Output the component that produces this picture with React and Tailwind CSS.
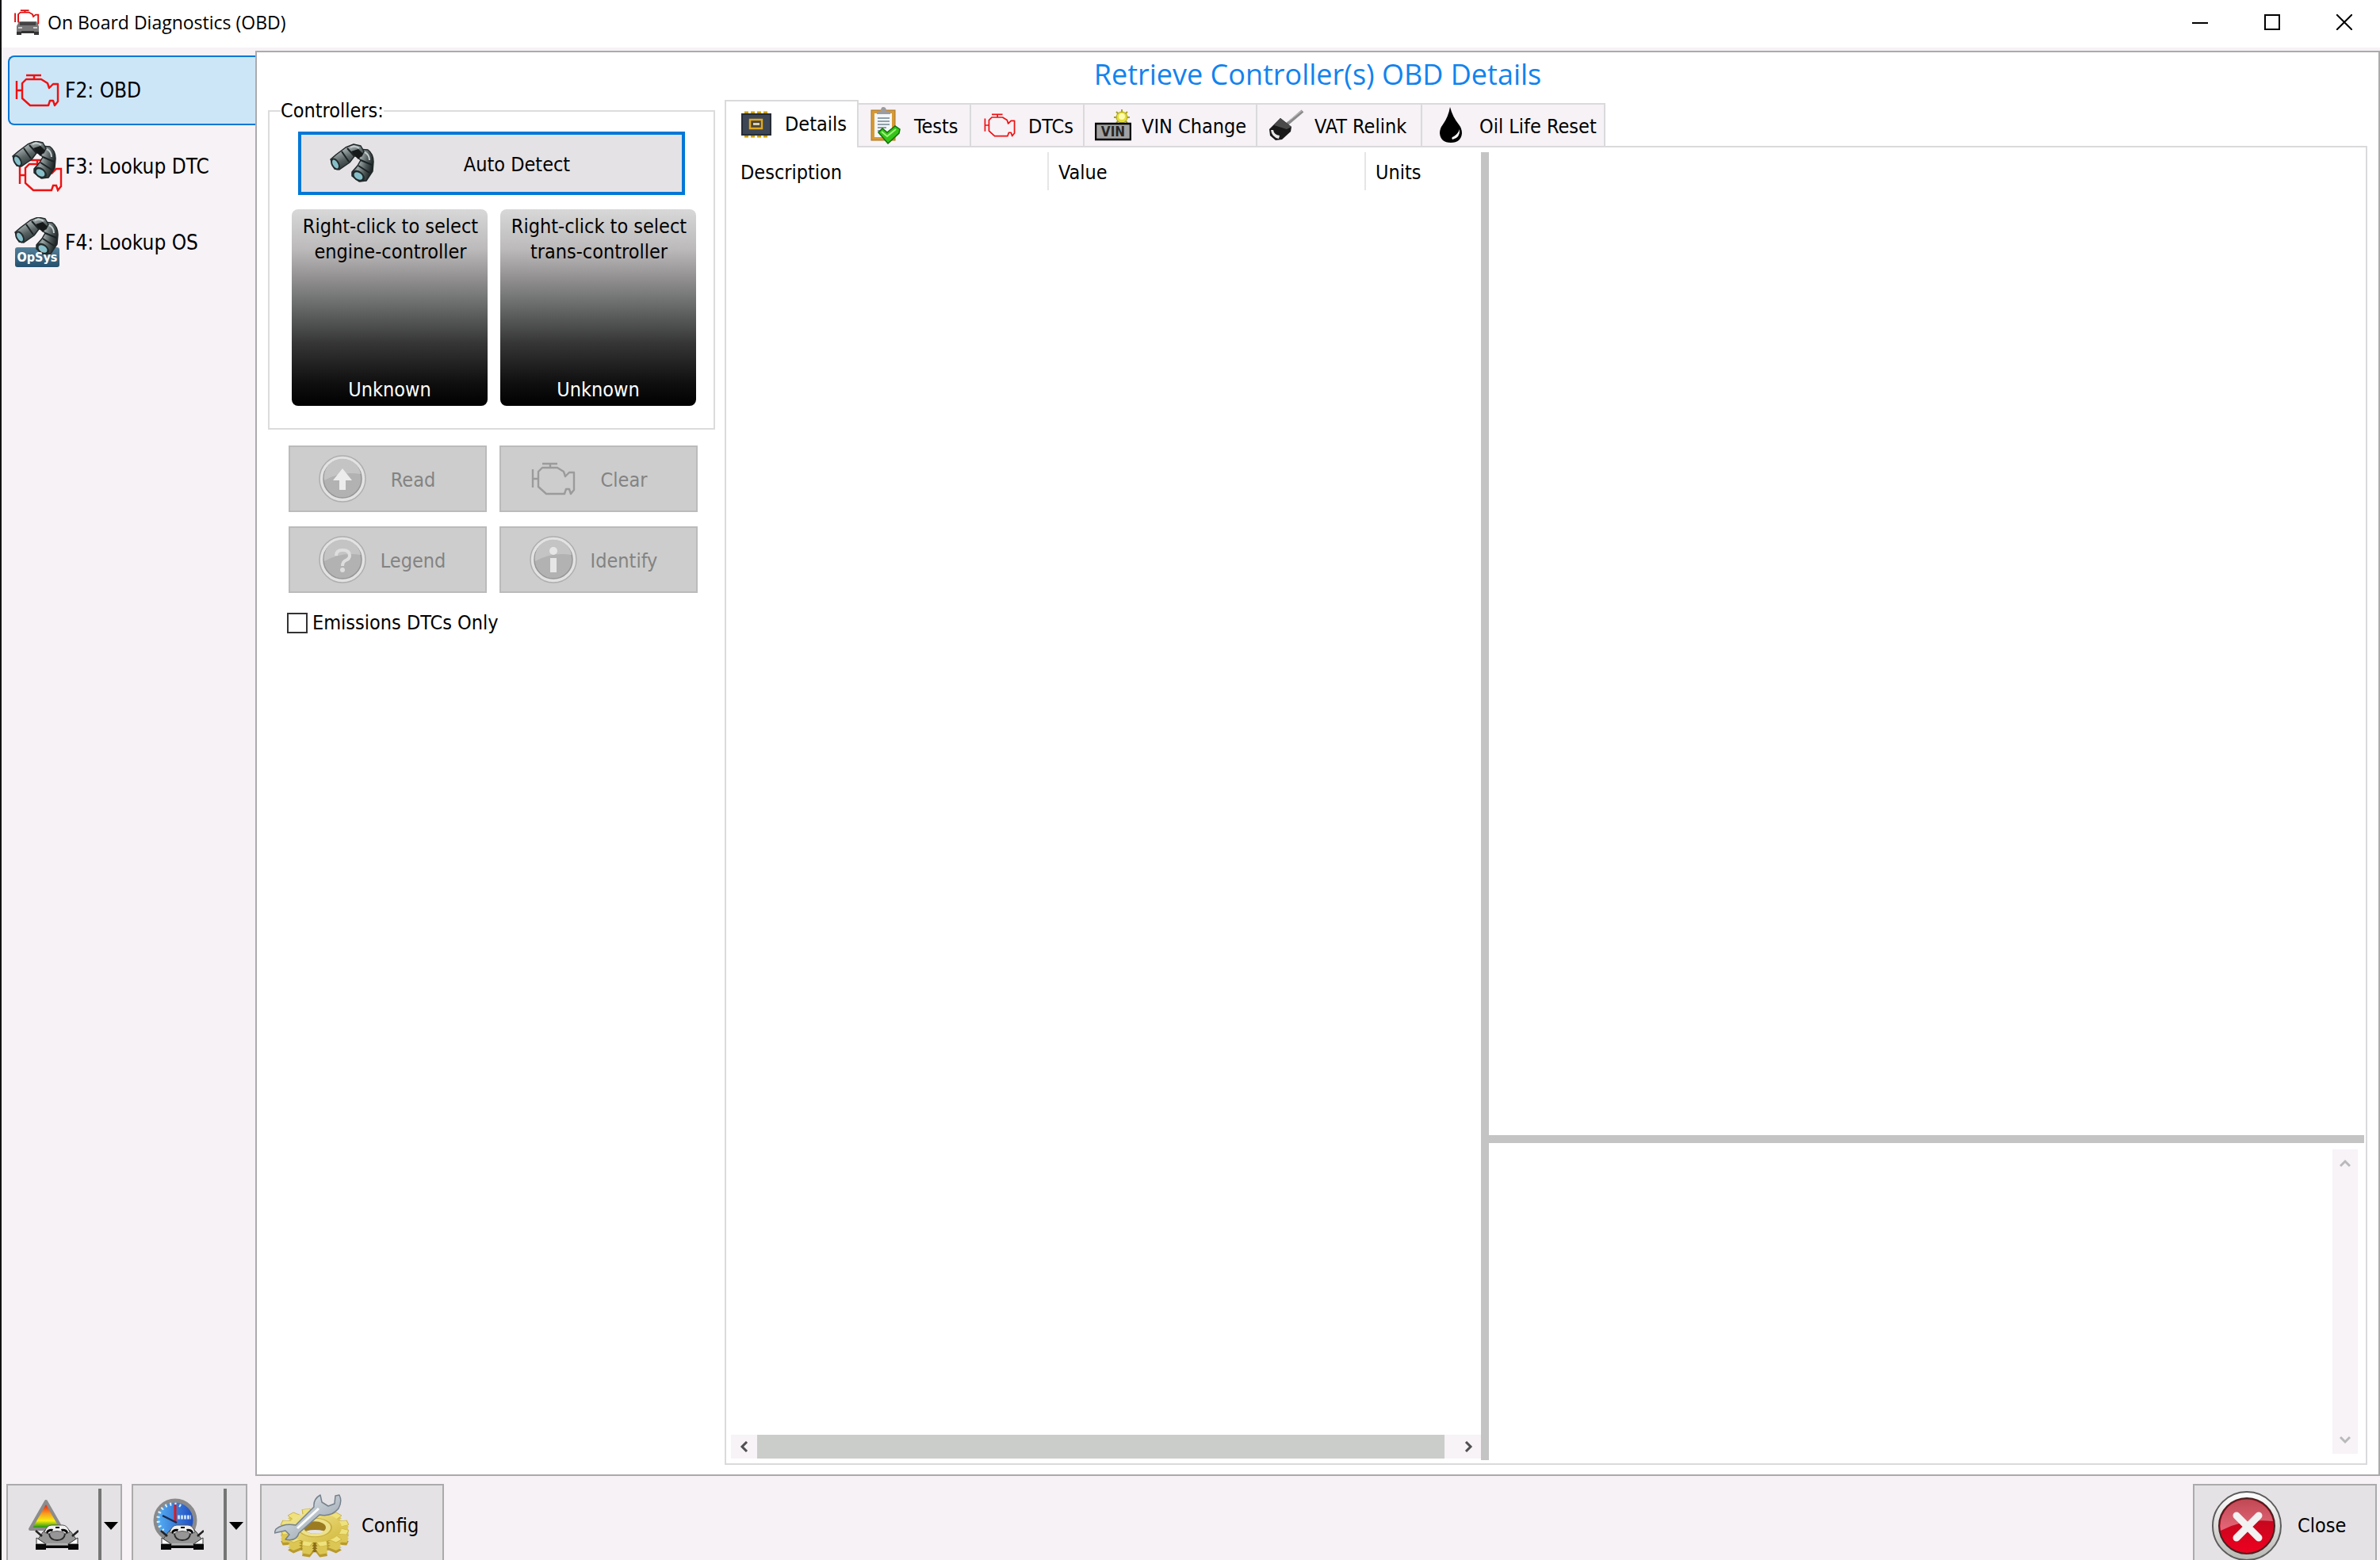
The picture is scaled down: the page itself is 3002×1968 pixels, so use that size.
import { useState } from "react";
///////////////////////////////////////////////////
const ENGINE_BODY =
  "M14 7 H33 L41 12 L43 18 L48 13 H54 V35 L50 40 L48 34 H44 L42 40 H19 L9 31 V12 Z";

function EngineIcon({ className, color = "#ee1111" }) {
  return (
    <svg viewBox="0 0 56 42" className={className} fill="none" stroke={color} strokeWidth="2.4" strokeLinejoin="round">
      <path d={ENGINE_BODY} />
      <path d="M14 2 H33 M24 2 V7 M2 9 V32 M2 21 H9" />
    </svg>
  );
}

function Barrels() {
  return (
    <g strokeLinejoin="round">
      <defs>
        <linearGradient id="tube" x1="0" y1="0" x2="0.6" y2="1">
          <stop offset="0" stopColor="#3a4243" />
          <stop offset="0.3" stopColor="#a9b2b2" />
          <stop offset="0.6" stopColor="#5a6464" />
          <stop offset="1" stopColor="#1d2324" />
        </linearGradient>
        <linearGradient id="tube2" x1="0" y1="0" x2="1" y2="0.4">
          <stop offset="0" stopColor="#22292a" />
          <stop offset="0.45" stopColor="#9aa4a4" />
          <stop offset="0.75" stopColor="#4d5656" />
          <stop offset="1" stopColor="#202627" />
        </linearGradient>
      </defs>
      <path d="M34 6 L48 7 Q55 12 55 22 L54 34 L46 46 L37 47 L28 40 L28 35 L35 27 L39 20 L32 14 Z" fill="url(#tube2)" stroke="#20282a" strokeWidth="1.5" />
      <path d="M1 19 L8 13 L20 4 L30 0 L39 2 L43 9 L40 15 L31 15 L25 23 L12 32 L6 31 Z" fill="url(#tube)" stroke="#20282a" strokeWidth="1.5" />
      <path d="M15 9 L24 22 M22 5 L31 15 M39 20 L53 26 M36 27 L50 36" stroke="#1c2223" strokeWidth="2" />
      <path d="M27 9 L36 6 L42 12 L36 19 L31 14 Z" fill="#15191a" />
      <path d="M26 4 Q32 1 37 5 M44 10 Q50 13 50 20" fill="none" stroke="#c5cdcd" strokeWidth="2" />
      <ellipse cx="7" cy="25" rx="5" ry="8" transform="rotate(-30 7 25)" fill="#222a2b" />
      <ellipse cx="7" cy="25" rx="3" ry="6" transform="rotate(-30 7 25)" fill="#86bfca" />
      <ellipse cx="36" cy="40" rx="9" ry="6" transform="rotate(35 36 40)" fill="#222a2b" />
      <ellipse cx="36" cy="40" rx="6" ry="4" transform="rotate(35 36 40)" fill="#86bfca" />
    </g>
  );
}

function BinocularsIcon({ className }) {
  return (
    <svg viewBox="0 -1 56 50" className={className}>
      <Barrels />
    </svg>
  );
}

function LookupDtcIcon({ className }) {
  return (
    <svg viewBox="0 0 64 64" className={className}>
      <g transform="translate(8 22)" fill="none" stroke="#ee1111" strokeWidth="2.4">
        <path d={ENGINE_BODY} />
        <path d="M14 2 H33 M24 2 V7 M2 9 V32 M2 21 H9" />
      </g>
      <Barrels />
    </svg>
  );
}

function LookupOsIcon({ className }) {
  return (
    <svg viewBox="0 0 58 64" className={className}>
      <defs>
        <linearGradient id="os" x1="0" y1="0" x2="0" y2="1">
          <stop offset="0" stopColor="#55809a" />
          <stop offset="1" stopColor="#24506d" />
        </linearGradient>
      </defs>
      <rect x="1" y="38" width="56" height="25" rx="3" fill="url(#os)" />
      <Barrels />
      <text x="29" y="56" fontSize="16" fontWeight="700" fontFamily="DejaVu Sans Condensed, sans-serif" fill="#fff" textAnchor="middle">
        OpSys
      </text>
    </svg>
  );
}

// Front of the car, shared by the two footer tools
function Car() {
  return (
    <g>
      <path d="M9 10 L15 4 H39 L45 10 L52 20 V27 H2 V20 Z" fill="#969696" stroke="#444" />
      <path d="M0 8 L8 15 M54 8 L46 15" stroke="#222" strokeWidth="2.5" />
      <path d="M11 10 Q14 1 20 1 H34 Q40 1 43 10 L38 12 Q27 5 16 12 Z" fill="#f0f0f0" stroke="#555" />
      <path d="M13 10 Q15 5 22 6 L21 9 Q17 8 15 12 Z M41 10 Q39 5 32 6 L33 9 Q37 8 39 12 Z M25 3 H30 V5 H25 Z" fill="#080808" />
      <path d="M17 12 Q18 20 27 20 Q36 20 37 12" fill="none" stroke="#2c2c2c" strokeWidth="2" />
      <path d="M1 17 L13 25 H1 Z M53 17 L41 25 H53 Z" fill="#fff" stroke="#333" />
      <path d="M14 25 H40" stroke="#b4b4b4" strokeWidth="2" />
      <path d="M0 25 H13 V32 H0 Z M41 25 H54 V32 H41 Z M13 27 H41 V30 H13 Z" fill="#080808" />
    </g>
  );
}

function AppIcon() {
  return (
    <svg viewBox="0 0 32 32" className="size-8">
      <g transform="scale(0.56 0.5)" fill="none" stroke="#e01010" strokeWidth="3.5">
        <path d={ENGINE_BODY} />
        <path d="M14 2 H33 M24 2 V7 M2 9 V32" />
      </g>
      <path d="M6 15 H28 L31 21 V28 H3 V21 Z" fill="#777" />
      <path d="M7 18 H27" stroke="#444" strokeWidth="4" />
      <path d="M5 23 H10 M24 23 H29" stroke="#ccc" strokeWidth="2" />
      <path d="M3 28 H9 V32 H3 Z M25 28 H31 V32 H25 Z M9 27 H25 V30 H9 Z" fill="#333" />
    </svg>
  );
}

function WarningCarIcon() {
  return (
    <svg viewBox="0 0 64 66" className="h-[66px] w-16">
      <defs>
        <linearGradient id="warn" x1="0" y1="0" x2="0" y2="1">
          <stop offset="0.15" stopColor="#f02a10" />
          <stop offset="0.45" stopColor="#f8a020" />
          <stop offset="0.7" stopColor="#f5ee10" />
          <stop offset="0.95" stopColor="#189018" />
        </linearGradient>
      </defs>
      <path d="M23 4 L43 39 H3 Z" fill="url(#warn)" stroke="#8c8c8c" strokeWidth="4" strokeLinejoin="round" />
      <g transform="translate(10 33)">
        <Car />
      </g>
    </svg>
  );
}

function GaugeCarIcon() {
  return (
    <svg viewBox="0 0 64 66" className="h-[66px] w-16">
      <defs>
        <linearGradient id="gauge" x1="0" y1="0" x2="1" y2="0">
          <stop offset="0" stopColor="#58b4f4" />
          <stop offset="1" stopColor="#1c48c0" />
        </linearGradient>
      </defs>
      <circle cx="28" cy="28" r="25" fill="url(#gauge)" stroke="#8a8a8a" strokeWidth="5" />
      <path d="M13 41 A19 19 0 1 1 38 12" fill="none" stroke="#d8f0ff" strokeWidth="4" strokeDasharray="2 4" />
      <path d="M31 24 H48" stroke="#c4dcfa" strokeWidth="5" strokeDasharray="3 1" />
      <path d="M28 8 V30" stroke="#e01818" strokeWidth="3" />
      <path d="M12 22 L30 31" stroke="#1a2a50" strokeWidth="2.5" />
      <g transform="translate(10 33)">
        <Car />
      </g>
    </svg>
  );
}

function ConfigIcon() {
  const teeth = [15, 45, 75, 105, 135, 165, 195, 225, 255, 285, 315, 345];
  return (
    <svg viewBox="0 0 94 80" className="h-20 w-[94px]">
      <defs>
        <linearGradient id="gold" x1="0" y1="0" x2="1" y2="1">
          <stop offset="0" stopColor="#f4ea98" />
          <stop offset="1" stopColor="#d2b83c" />
        </linearGradient>
        <linearGradient id="rim" x1="0" y1="0" x2="1" y2="0">
          <stop offset="0" stopColor="#c9ac30" />
          <stop offset="0.5" stopColor="#8a6a14" />
          <stop offset="1" stopColor="#dcc850" />
        </linearGradient>
        <linearGradient id="steel" x1="0" y1="0" x2="1" y2="1">
          <stop offset="0" stopColor="#eef2f5" />
          <stop offset="1" stopColor="#8b98a4" />
        </linearGradient>
      </defs>
      <g transform="translate(51 42) scale(1 0.56)">
        <ellipse cy="24" rx="34" ry="32" fill="url(#rim)" />
        {[24, 18, 12, 6].map((dy) =>
          teeth.map((a) => (
            <path key={`${dy}-${a}`} d="M-7 -30 L-5 -43 H5 L7 -30 Z" transform={`translate(0 ${dy}) rotate(${a})`} fill={dy === 24 ? "#b89a2c" : "#dcc654"} />
          ))
        )}
        {teeth.map((a) => (
          <path key={a} d="M-7 -30 L-5 -43 H5 L7 -30 Z" transform={`rotate(${a})`} fill="#efe27c" stroke="#c9b040" />
        ))}
        <circle r="34" fill="url(#gold)" />
        <circle r="21" fill="#ece08a" stroke="#c9b040" strokeWidth="2" />
        <circle r="14" fill="#9c7c20" />
        <path d="M-11 8 A14 14 0 0 0 12 8 A22 16 0 0 0 -11 8" fill="#e6e3e6" />
      </g>
      <path
        d="M58 1 Q49 6 50 16 L27 39 Q12 36 2 44 L0 49 L14 46 L19 51 L14 57 Q28 60 31 49 L57 26 Q72 29 81 18 Q86 9 82 1 L77 2 L76 12 L68 15 L60 10 Z"
        fill="url(#steel)"
        stroke="#75818c"
        strokeWidth="1.5"
        strokeLinejoin="round"
      />
      <path d="M29 43 L56 18" stroke="#fafcfd" strokeWidth="3" />
    </svg>
  );
}

function CloseIcon() {
  return (
    <svg viewBox="0 0 88 88" className="size-[88px]">
      <defs>
        <linearGradient id="ring" x1="0" y1="0" x2="0" y2="1">
          <stop offset="0" stopColor="#ffffff" />
          <stop offset="1" stopColor="#b8b8b4" />
        </linearGradient>
        <linearGradient id="red" x1="0" y1="0" x2="0" y2="1">
          <stop offset="0" stopColor="#a80c1c" />
          <stop offset="1" stopColor="#f00020" />
        </linearGradient>
        <linearGradient id="shine" x1="0" y1="0" x2="0" y2="1">
          <stop offset="0" stopColor="#fff" stopOpacity="0.25" />
          <stop offset="1" stopColor="#fff" stopOpacity="0.4" />
        </linearGradient>
      </defs>
      <circle cx="44" cy="44" r="43" fill="url(#ring)" stroke="#5c5c5c" strokeWidth="2" />
      <circle cx="44" cy="44" r="35" fill="url(#red)" stroke="#4a2020" strokeWidth="2" />
      <path d="M11 50 A33 33 0 0 1 77 38 Q40 34 11 50" fill="url(#shine)" />
      <path d="M31 31 L59 59 M59 31 L31 59" stroke="#f2f2f2" strokeWidth="9" strokeLinecap="round" />
    </svg>
  );
}

function RoundIcon({ children }) {
  return (
    <svg viewBox="0 0 60 60" className="size-[60px] shrink-0">
      <circle cx="30" cy="30" r="29" fill="#e2e2e2" stroke="#aeaeae" strokeWidth="1.5" />
      <circle cx="30" cy="30" r="24" fill="#b2b2b2" stroke="#969696" strokeWidth="1.5" />
      <path d="M7 32 A23 23 0 0 1 53 24 Q28 20 7 32" fill="#c4c4c4" />
      {children}
    </svg>
  );
}

function ReadIcon() {
  return (
    <RoundIcon>
      <path d="M30 17 L42 32 H34 V44 H26 V32 H18 Z" fill="#ececec" />
    </RoundIcon>
  );
}

function LegendIcon() {
  return (
    <RoundIcon>
      <path d="M22 25 Q22 18 30 18 Q39 18 39 25 Q39 29 34 31 Q30 33 30 38" fill="none" stroke="#dedede" strokeWidth="4" />
      <circle cx="30" cy="43" r="3" fill="#dedede" />
    </RoundIcon>
  );
}

function IdentifyIcon() {
  return (
    <RoundIcon>
      <circle cx="30" cy="19" r="5" fill="#e6e6e6" />
      <path d="M30 28 V46" stroke="#e6e6e6" strokeWidth="8" />
    </RoundIcon>
  );
}

function ClearIcon() {
  return (
    <span className="flex w-[60px] shrink-0 justify-center">
      <EngineIcon className="h-[42px] w-14" color="#9b9b9b" />
    </span>
  );
}

function ChipIcon() {
  return (
    <svg viewBox="0 0 38 34" className="h-[34px] w-[38px]">
      <path d="M4 3 H34 M4 31 H34" stroke="#c8a010" strokeWidth="5" strokeDasharray="5 3" />
      <rect x="1" y="4" width="36" height="26" fill="#3c4654" stroke="#252c36" strokeWidth="2" />
      <rect x="11" y="11" width="15" height="11" fill="#4a4436" stroke="#e0a820" strokeWidth="2.5" />
      <rect x="15" y="15" width="8" height="3" fill="#d8d0b0" />
    </svg>
  );
}

function ClipboardIcon() {
  return (
    <svg viewBox="0 0 38 48" className="h-12 w-[38px]">
      <rect x="1" y="5" width="30" height="38" fill="#d79a34" stroke="#a87424" />
      <path d="M5 9 H27 V31 L21 39 H5 Z" fill="#f4f7f9" />
      <path d="M9 15 H24 M9 19 H24 M9 23 H24 M9 27 H20 M9 31 H17" stroke="#8fa0ab" strokeWidth="2" />
      <path d="M8 10 V6 H13 Q13 1 16 1 Q20 1 20 6 H25 V10 Z" fill="#9a9ca0" />
      <path d="M10 33 L15 28 L21 33 L31 25 L37 29 L36 34 L22 47 Z" fill="#34c518" stroke="#147008" strokeWidth="1.5" />
      <path d="M14 32 L21 38 L32 29" fill="none" stroke="#a6f080" strokeWidth="2" />
    </svg>
  );
}

function VinIcon() {
  return (
    <svg viewBox="0 0 46 40" className="h-10 w-[46px]">
      <g stroke="#a8a020" strokeWidth="2">
        <path d="M34 0 V20 M24 10 H44 M27 3 L41 17 M41 3 L27 17" />
      </g>
      <circle cx="34" cy="10" r="7" fill="#e4de30" stroke="#a8a020" />
      <circle cx="34" cy="9" r="4" fill="#fdfbb0" />
      <rect x="1" y="18" width="44" height="20" fill="#a2a2a2" stroke="#000" strokeWidth="2.5" />
      <text x="23" y="34" fontSize="17" fontWeight="700" fontFamily="DejaVu Sans Condensed, sans-serif" fill="#262626" textAnchor="middle">
        VIN
      </text>
    </svg>
  );
}

function KeyIcon() {
  return (
    <svg viewBox="0 0 46 40" className="h-10 w-[46px]">
      <path d="M24 19 L44 2" stroke="#8a8a8a" strokeWidth="4" />
      <path d="M26 15 L44 1" stroke="#c8c8c8" strokeWidth="1" />
      <path d="M2 25 L16 11 L30 22 L29 28 L18 38 L10 39 L3 33 Z" fill="#181818" />
      <path d="M8 20 L16 11 L30 22 L24 25 Z" fill="#4a4a4a" />
      <path d="M4 26 Q5 35 14 37 L15 33 Q8 32 7 26 Z" fill="#e8e8e8" />
    </svg>
  );
}

function OilIcon() {
  return (
    <svg viewBox="0 0 30 46" className="h-[46px] w-[30px]">
      <path d="M14 0 Q17 12 25 22 Q29 27 29 33 Q28 45 15 45 Q2 45 1 33 Q1 27 5 22 Q12 12 14 0 Z" fill="#000" />
      <path d="M26 28 Q27 39 17 41 Q15 38 19 37 Q24 34 26 28 Z" fill="#fff" />
    </svg>
  );
}

function Chevron({ d }) {
  return (
    <svg viewBox="0 0 14 14" className="size-3.5" fill="none" stroke="currentColor" strokeWidth="3">
      <path d={d} />
    </svg>
  );
}

const NAV = [
  { label: "F2: OBD", icon: <EngineIcon className="h-[42px] w-14" /> },
  { label: "F3: Lookup DTC", icon: <LookupDtcIcon className="size-16" /> },
  { label: "F4: Lookup OS", icon: <LookupOsIcon className="h-16 w-[58px]" /> },
];

const TABS = [
  { label: "Details", icon: <ChipIcon />, width: "w-[169px] pl-3.5" },
  { label: "Tests", icon: <ClipboardIcon />, width: "w-[142px] pl-2.5" },
  { label: "DTCs", icon: <EngineIcon className="h-[30px] w-[42px]" />, width: "w-[143px] pl-3" },
  { label: "VIN Change", icon: <VinIcon />, width: "w-[218px] pl-3" },
  { label: "VAT Relink", icon: <KeyIcon />, width: "w-[208px] pl-3" },
  { label: "Oil Life Reset", icon: <OilIcon />, width: "w-[231px] pl-3" },
];

const ACTIONS = [
  { label: "Read", icon: <ReadIcon /> },
  { label: "Clear", icon: <ClearIcon /> },
  { label: "Legend", icon: <LegendIcon /> },
  { label: "Identify", icon: <IdentifyIcon /> },
];

function TitleBar() {
  return (
    <header className="flex h-[60px] items-center bg-white pb-1 pl-4">
      <AppIcon />
      <h1 className="flex-1 pl-2.5 font-['Open_Sans',sans-serif] text-[23px]">On Board Diagnostics (OBD)</h1>
      <button aria-label="Minimize" className="flex h-14 w-[91px] items-center justify-center">
        <svg viewBox="0 0 20 20" className="size-5" stroke="#000" strokeWidth="2">
          <path d="M0 11 H20" />
        </svg>
      </button>
      <button aria-label="Maximize" className="flex h-14 w-[91px] items-center justify-center">
        <svg viewBox="0 0 20 20" className="size-5" fill="none" stroke="#000" strokeWidth="2">
          <rect x="1" y="1" width="18" height="18" />
        </svg>
      </button>
      <button aria-label="Close window" className="flex h-14 w-[91px] items-center justify-center">
        <svg viewBox="0 0 20 20" className="size-5" stroke="#000" strokeWidth="2">
          <path d="M0 0 L20 20 M20 0 L0 20" />
        </svg>
      </button>
    </header>
  );
}

function Sidebar({ active, onSelect }) {
  return (
    <nav className="flex w-80 shrink-0 flex-col gap-2 pt-2.5 pl-2">
      {NAV.map((item) => (
        <button
          key={item.label}
          onClick={() => onSelect(item.label)}
          className={`flex h-[88px] items-center rounded-l-lg border-2 border-r-0 text-[26px] ${
            active === item.label ? "border-[#0078d7] bg-[#cde6f7]" : "border-transparent"
          }`}
        >
          <span className="flex w-[70px] justify-center">{item.icon}</span>
          <span>{item.label}</span>
        </button>
      ))}
    </nav>
  );
}

function ControllerCard({ hint }) {
  return (
    <button className="flex h-[248px] w-[247px] flex-col items-center justify-between rounded-lg bg-[linear-gradient(#d8d8d8_0%,#bcbabb_20%,#8f8d8e_36%,#6b6e6d_48%,#363636_68%,#101010_88%,#000_100%)] pt-1.5 pb-1 leading-8">
      <span className="pl-0.5 whitespace-pre-line">{hint}</span>
      <span className="text-white">Unknown</span>
    </button>
  );
}

function Controls() {
  return (
    <section className="w-[564px] shrink-0">
      <fieldset className="border-2 border-[#dcdcdc] pb-7">
        <legend className="ml-3.5 leading-7">Controllers:</legend>
        <button className="mx-9 mt-3 flex h-20 w-[488px] items-center border-4 border-[#0078d7] bg-[#e5e2e5] pl-9">
          <BinocularsIcon className="h-[52px] w-14 shrink-0" />
          <span className="flex-1 pt-1 pr-7 text-center">Auto Detect</span>
        </button>
        <div className="mt-[18px] flex gap-4 pl-7">
          <ControllerCard hint={"Right-click to select\nengine-controller"} />
          <ControllerCard hint={"Right-click to select\ntrans-controller"} />
        </div>
      </fieldset>
      <div className="mt-5 mr-[22px] ml-[26px] grid grid-cols-2 gap-x-4 gap-y-[18px]">
        {ACTIONS.map((action) => (
          <button
            key={action.label}
            disabled
            className="flex h-[84px] items-center border-2 border-[#bbbbbb] bg-[#cdcdcd] pr-8 pl-9 text-[#838383]"
          >
            {action.icon}
            <span className="flex-1 pt-1 text-center">{action.label}</span>
          </button>
        ))}
      </div>
      <label className="mt-6 ml-6 flex items-center gap-1.5 leading-7">
        <input type="checkbox" className="size-[26px] appearance-none border-2 border-[#333] bg-white" />
        Emissions DTCs Only
      </label>
    </section>
  );
}

function TabStrip({ active, onSelect }) {
  return (
    <div role="tablist" className="flex h-[60px] items-end">
      {TABS.map((tab) => (
        <button
          key={tab.label}
          role="tab"
          aria-selected={active === tab.label}
          onClick={() => onSelect(tab.label)}
          className={`flex shrink-0 items-center gap-3 border-t-2 border-r-2 border-[#dadadc] ${tab.width} ${
            active === tab.label ? "h-[60px] border-l-2 bg-white" : "h-14 border-b-2 bg-[#f6f2f6]"
          }`}
        >
          <span className="flex w-12 shrink-0 justify-center">{tab.icon}</span>
          <span className={`whitespace-nowrap ${active === tab.label ? "" : "pt-1"}`}>{tab.label}</span>
        </button>
      ))}
      <div className="flex-1 border-b-2 border-[#dadadc]" />
    </div>
  );
}

function DetailsPane() {
  return (
    <div className="flex flex-1 border-2 border-t-0 border-[#dadadc] pt-1.5 pr-0.5 pb-1 pl-1.5">
      <div className="flex w-[946px] shrink-0 flex-col">
        <table className="w-full table-fixed text-left">
          <thead>
            <tr className="h-12">
              <th className="w-[400px] border-r-2 border-[#e6e6e6] pt-1 pl-3 font-normal">Description</th>
              <th className="w-[400px] border-r-2 border-[#e6e6e6] pt-1 pl-3 font-normal">Value</th>
              <th className="pt-1 pl-3 font-normal">Units</th>
            </tr>
          </thead>
        </table>
        <div className="flex-1" />
        <div className="mb-0.5 flex h-[30px] bg-[#f7f3f7] text-[#505050]">
          <button aria-label="Scroll left" className="flex w-[33px] items-center justify-center">
            <Chevron d="M10 1 L4 7 L10 13" />
          </button>
          <div className="mr-3.5 flex-1 bg-[#cbcdca]" />
          <button aria-label="Scroll right" className="flex w-8 items-center justify-center">
            <Chevron d="M4 1 L10 7 L4 13" />
          </button>
        </div>
      </div>
      <div className="w-2.5 bg-[#c4c4c4]" />
      <div className="flex flex-1 flex-col">
        <div className="flex-1" />
        <div className="h-2.5 bg-[#c4c4c4]" />
        <div className="flex h-[400px] justify-end p-2">
          <div className="flex w-8 flex-col items-center justify-between bg-[#f7f3f7] text-[#b9b9b9]">
            <button aria-label="Scroll up" className="flex h-9 w-full items-center justify-center">
              <Chevron d="M1 10 L7 4 L13 10" />
            </button>
            <button aria-label="Scroll down" className="flex h-9 w-full items-center justify-center">
              <Chevron d="M1 4 L7 10 L13 4" />
            </button>
          </div>
        </div>
      </div>
    </div>
  );
}

function SplitButton({ label, icon }) {
  return (
    <div className="flex w-[146px] border-2 border-b-0 border-[#ababab] bg-[#e5e2e5]">
      <button aria-label={label} className="flex flex-1 items-center justify-center pt-1">
        {icon}
      </button>
      <button aria-label={`${label} menu`} className="mt-1 flex w-7 items-center justify-center border-l-4 border-[#757575] pt-1">
        <svg viewBox="0 0 18 10" className="h-2.5 w-[18px]">
          <path d="M0 0 H18 L9 10 Z" />
        </svg>
      </button>
    </div>
  );
}

function Footer() {
  return (
    <footer className="flex h-[106px] gap-3 pt-2.5 pr-1 pl-1.5">
      <SplitButton label="Diagnostics" icon={<WarningCarIcon />} />
      <SplitButton label="Gauges" icon={<GaugeCarIcon />} />
      <button className="ml-1 flex w-[232px] items-center gap-4 border-2 border-b-0 border-[#ababab] bg-[#e5e2e5] pt-2 pl-4">
        <ConfigIcon />
        Config
      </button>
      <button className="ml-auto flex w-[232px] items-center gap-5 border-2 border-b-0 border-[#ababab] bg-[#e5e2e5] pt-2 pl-[22px]">
        <CloseIcon />
        Close
      </button>
    </footer>
  );
}

export default function App() {
  const [page, setPage] = useState("F2: OBD");
  const [tab, setTab] = useState("Details");

  return (
    <div className="flex min-h-screen flex-col border-l-2 border-[#111] bg-[#f6f2f6] font-['DejaVu_Sans_Condensed','Noto_Sans',sans-serif] text-[25px] leading-8 text-black">
      <TitleBar />
      <div className="flex flex-1">
        <Sidebar active={page} onSelect={setPage} />
        <main className="mt-1 flex flex-1 flex-col border-2 border-[#ababab] bg-white px-3.5 pb-3">
          <h2 className="flex h-[60px] items-center justify-center pb-1 font-['Open_Sans',sans-serif] text-4xl text-[#1283ee]">
            Retrieve Controller(s) OBD Details
          </h2>
          <div className="flex flex-1 gap-3">
            <Controls />
            <section className="flex flex-1 flex-col">
              <TabStrip active={tab} onSelect={setTab} />
              <DetailsPane />
            </section>
          </div>
        </main>
      </div>
      <Footer />
    </div>
  );
}
